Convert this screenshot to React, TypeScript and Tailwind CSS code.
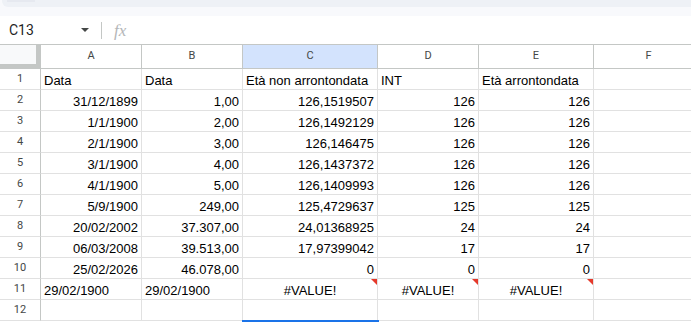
type Cell = { v: string; align?: "l" | "r" | "c"; err?: boolean };

const COLS = [
  { key: "A", w: "w-[101px]" },
  { key: "B", w: "w-[101px]" },
  { key: "C", w: "w-[135px]" },
  { key: "D", w: "w-[101px]" },
  { key: "E", w: "w-[115px]" },
  { key: "F", w: "w-[110px]" },
];

const r = (v: string): Cell => ({ v, align: "r" });
const l = (v: string): Cell => ({ v, align: "l" });
const e = (): Cell => ({ v: "#VALUE!", align: "c", err: true });

const ROWS: Cell[][] = [
  [l("Data"), l("Data"), l("Età non arrontondata"), l("INT"), l("Età arrontondata"), l("")],
  [r("31/12/1899"), r("1,00"), r("126,1519507"), r("126"), r("126"), l("")],
  [r("1/1/1900"), r("2,00"), r("126,1492129"), r("126"), r("126"), l("")],
  [r("2/1/1900"), r("3,00"), r("126,146475"), r("126"), r("126"), l("")],
  [r("3/1/1900"), r("4,00"), r("126,1437372"), r("126"), r("126"), l("")],
  [r("4/1/1900"), r("5,00"), r("126,1409993"), r("126"), r("126"), l("")],
  [r("5/9/1900"), r("249,00"), r("125,4729637"), r("125"), r("125"), l("")],
  [r("20/02/2002"), r("37.307,00"), r("24,01368925"), r("24"), r("24"), l("")],
  [r("06/03/2008"), r("39.513,00"), r("17,97399042"), r("17"), r("17"), l("")],
  [r("25/02/2026"), r("46.078,00"), r("0"), r("0"), r("0"), l("")],
  [l("29/02/1900"), l("29/02/1900"), e(), e(), e(), l("")],
  [l(""), l(""), l(""), l(""), l(""), l("")],
];

function Toolbar() {
  return (
    <div className="flex h-[28px] items-center bg-white">
      <div className="flex w-[92px] items-center pl-[9px]">
        <span className="text-[14px] leading-none text-[#1f1f1f] [font-family:Roboto,'Liberation_Sans',sans-serif]">C13</span>
        <span className="ml-auto mr-[3px] h-0 w-0 border-x-[4px] border-t-[4px] border-x-transparent border-t-[#444746]" />
      </div>
      <div className="ml-[9px] h-[17px] w-px bg-[#c4c7c5]" />
      <span className="ml-[12px] text-[17px] italic leading-none text-[#b4b6b8] [font-family:'Liberation_Serif',serif]">
        fx
      </span>
    </div>
  );
}

function HeaderRow() {
  return (
    <div className="flex h-[25px] border-t border-[#c4c7c5]">
      <div className="w-[41px] shrink-0 border-b-[5px] border-r-[5px] border-[#c4c7c5] bg-[#f8f9fa]" />
      {COLS.map((c) => (
        <div
          key={c.key}
          className={`${c.w} flex shrink-0 items-center justify-center border-b border-r border-[#c4c7c5] text-[11px] text-[#444746] [font-family:Roboto,'Liberation_Sans',sans-serif] ${
            c.key === "C" ? "bg-[#d3e3fd]" : "bg-white"
          }`}
        >
          {c.key}
        </div>
      ))}
    </div>
  );
}

function Row({ n, cells }: { n: number; cells: Cell[] }) {
  return (
    <div className="flex h-[21px]">
      <div className="flex w-[41px] shrink-0 items-center justify-center border-b border-r border-[#c4c7c5] border-b-[#e1e1e1] bg-white pt-px text-[11px] text-[#444746] [font-family:Roboto,'Liberation_Sans',sans-serif]">
        {n}
      </div>
      {cells.map((c, i) => (
        <div
          key={i}
          className={`${COLS[i].w} relative flex shrink-0 items-center whitespace-nowrap border-b border-r border-[#e1e1e1] px-[3px] pt-[2px] text-[13px] leading-[15px] text-black [font-family:'Liberation_Sans',Arial,sans-serif] ${
            c.align === "r" ? "justify-end" : c.align === "c" ? "justify-center" : "justify-start"
          }`}
        >
          {c.v}
          {c.err && (
            <span className="absolute right-0 top-0 h-0 w-0 border-l-[6px] border-t-[6px] border-l-transparent border-t-[#e5392b]" />
          )}
        </div>
      ))}
    </div>
  );
}

export default function App() {
  return (
    <div className="h-[322px] w-[691px] overflow-hidden bg-white">
      <div className="bg-[#f8f9fc]">
        <div className="ml-[2px] h-[7px] rounded-bl-[6px] bg-[#eef1f6]">
          <div className="ml-[5px] h-[2px] w-[28px] bg-[#e6e9f0]" />
        </div>
        <div className="h-[9px]" />
      </div>
      <Toolbar />
      <HeaderRow />
      {ROWS.map((cells, i) => (
        <Row key={i} n={i + 1} cells={cells} />
      ))}
      {/* active cell C13, only its top edge is in view */}
      <div className="relative -mt-px ml-[242px] h-[3px] w-[137px] bg-[#1a73e8]" />
    </div>
  );
}
